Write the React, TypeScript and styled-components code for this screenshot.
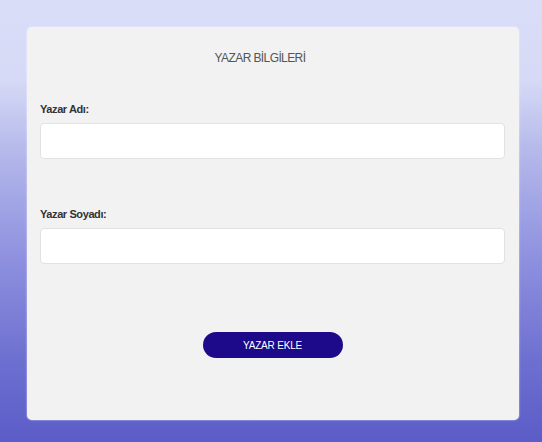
import React from "react";
import styled, { createGlobalStyle } from "styled-components";

const Global = createGlobalStyle`
  html, body { margin: 0; padding: 0; }
  body { font-family: "Liberation Sans", Arial, sans-serif; }
`;

const Page = styled.div`
  width: 542px;
  height: 442px;
  box-sizing: border-box;
  padding: 27px 23px 0 27px;
  background: linear-gradient(to bottom, #d9ddf8 0%, #d6daf6 18%, #b3b7ea 35%, #8c8ede 60%, #6d6fd0 82%, #5b5cc7 100%);
`;

const Card = styled.div`
  width: 492px;
  height: 393px;
  box-sizing: border-box;
  background: #f2f2f2;
  border-radius: 5px;
  box-shadow: 0 0 2px rgba(255, 255, 255, 0.8);
  padding: 24px 14px 0 13px;
  display: flex;
  flex-direction: column;
`;

const Title = styled.h2`
  margin: 0;
  padding-right: 25px;
  text-align: center;
  font-weight: normal;
  font-size: 12px;
  color: #555;
  letter-spacing: -0.6px;
  line-height: 14px;
`;

const Field = styled.div<{ $top: number }>`
  display: flex;
  flex-direction: column;
  margin-top: ${(p) => p.$top}px;
`;

const Label = styled.label`
  font-size: 11px;
  font-weight: bold;
  color: #333;
  letter-spacing: -0.4px;
  line-height: 13px;
  margin-bottom: 7px;
`;

const Input = styled.input`
  height: 36px;
  box-sizing: border-box;
  border: 1px solid #e2e2e2;
  border-radius: 4px;
  background: #fff;
  outline: none;
`;

const ButtonRow = styled.div`
  display: flex;
  justify-content: center;
  margin-top: 68px;
`;

const Button = styled.button`
  width: 140px;
  height: 26px;
  border: none;
  border-radius: 13px;
  background: #1c0a8a;
  color: #fff;
  font-family: "Liberation Sans", Arial, sans-serif;
  font-size: 10px;
  letter-spacing: -0.2px;
  cursor: pointer;
`;

export default function App() {
  return (
    <>
      <Global />
      <Page>
        <Card>
          <Title>YAZAR BİLGİLERİ</Title>
          <Field $top={38}>
            <Label>Yazar Adı:</Label>
            <Input />
          </Field>
          <Field $top={49}>
            <Label>Yazar Soyadı:</Label>
            <Input />
          </Field>
          <ButtonRow>
            <Button>YAZAR EKLE</Button>
          </ButtonRow>
        </Card>
      </Page>
    </>
  );
}
